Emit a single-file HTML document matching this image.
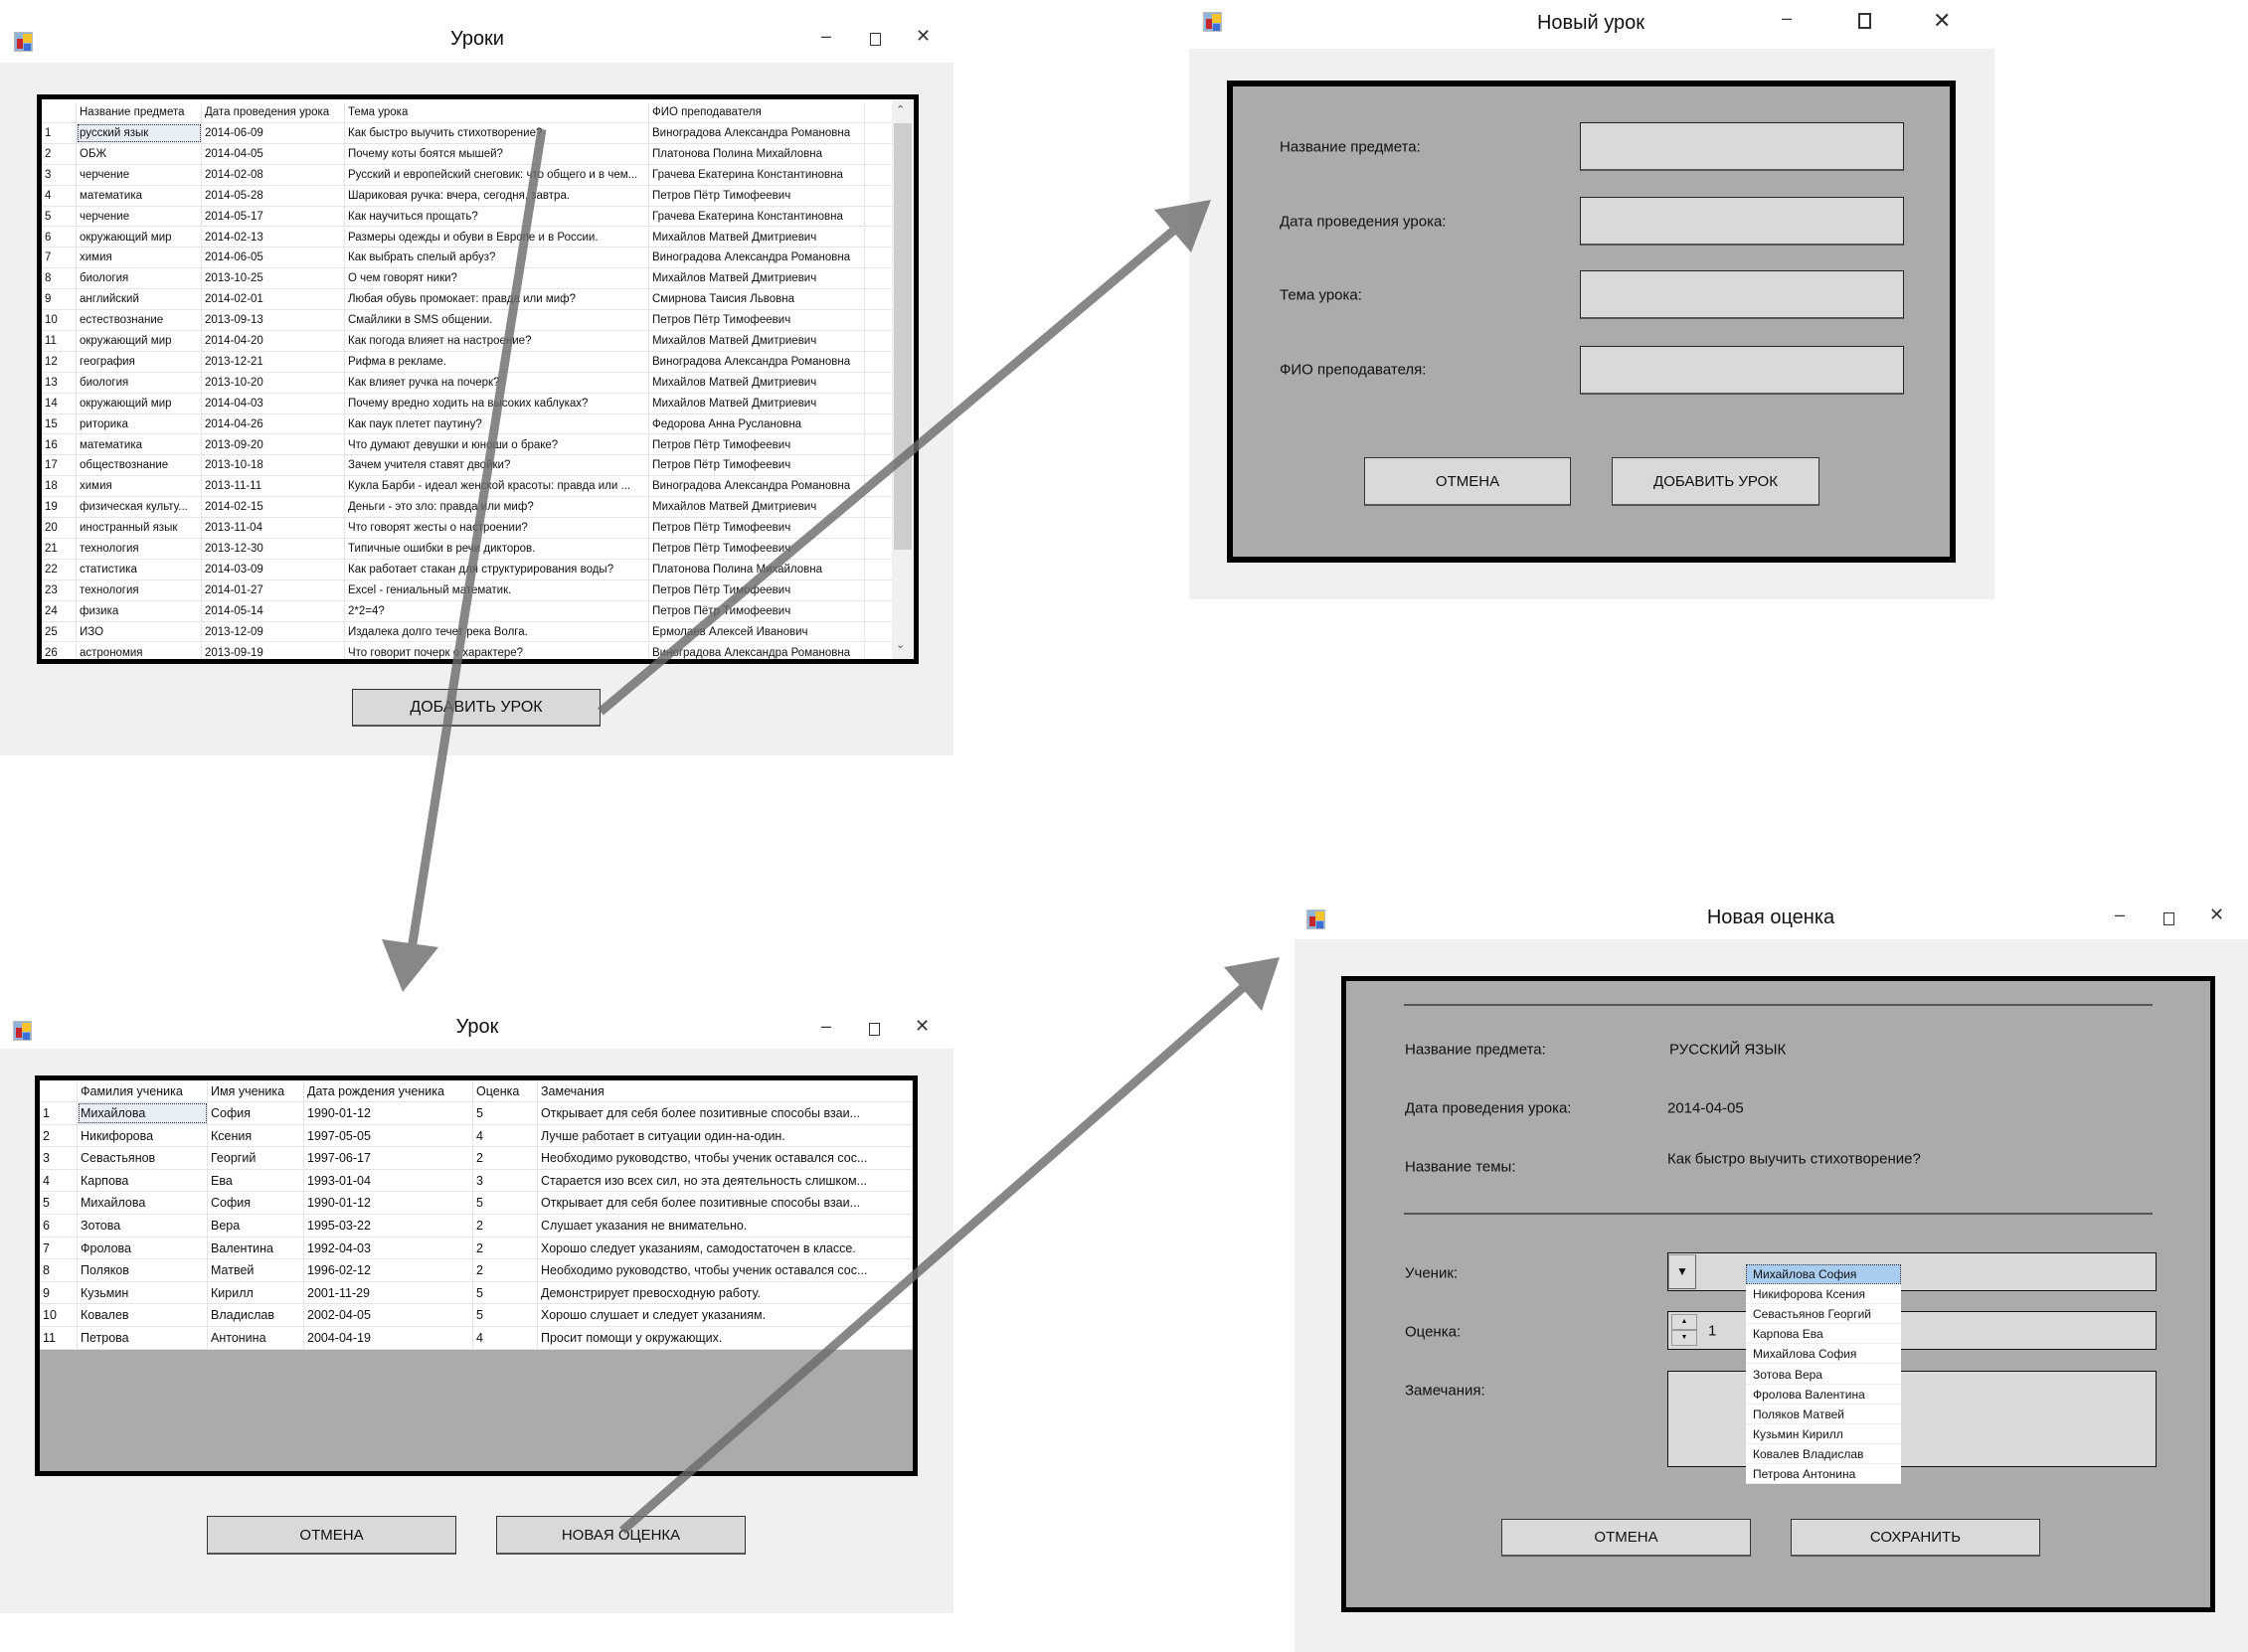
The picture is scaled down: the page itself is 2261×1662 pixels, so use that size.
<!DOCTYPE html>
<html><head><meta charset="utf-8">
<style>
*{margin:0;padding:0;box-sizing:border-box}
body{width:2261px;height:1662px;background:#fff;position:relative;overflow:hidden;font-family:"Liberation Sans","DejaVu Sans",sans-serif;color:#111}
.a{position:absolute}
.title{position:absolute;font-size:20px;color:#111;transform:translateX(-50%);white-space:nowrap}
.client{position:absolute;background:#f0f0f0}
.ico{position:absolute;width:19px;height:20px;background:#8fb3d9;border:1px solid #bbb}
.ico:before{content:"";position:absolute;left:2px;top:6px;width:6px;height:10px;background:#c4262b}
.ico:after{content:"";position:absolute;left:8px;top:1px;width:9px;height:9px;background:#f7c32c;box-shadow:0 9px 0 -1px #3d6fd6}
.ctl{position:absolute;font-size:18px;color:#333}
.tbl{position:absolute;font-size:11.5px;white-space:nowrap;overflow:hidden;background:#fff}
.row{position:absolute;left:0;right:0;border-bottom:1px solid #e4e4e4}
.row span{position:absolute;top:0;overflow:hidden;border-right:1px solid #e4e4e4;height:100%;padding-left:3px}
.btn{position:absolute;background:#d9d9d9;border:1px solid #333;border-bottom:2px solid #555;font-size:15px;display:flex;align-items:center;justify-content:center;color:#111}
.lbl{position:absolute;font-size:15px;white-space:nowrap;transform:translateY(-50%)}
.inp{position:absolute;background:#d9d9d9;border:1px solid #222;border-bottom:2px solid #555}
</style></head><body>

<!-- Window 1: Уроки -->
<div class="ico" style="left:14px;top:32px"></div>
<div class="title" style="left:480px;top:28px">Уроки</div>
<div class="ctl" style="left:826px;top:26px">–</div>
<div class="a" style="left:875px;top:33px;width:11px;height:13px;border:1px solid #333"></div>
<div class="ctl" style="left:921px;top:26px">✕</div>
<div class="client" style="left:0;top:63px;width:959px;height:697px"></div>
<div class="a" style="left:37px;top:95px;width:887px;height:573px;background:#000"></div>
<div class="tbl" id="t1" style="left:42px;top:100px;width:877px;height:563px"></div>
<div class="btn" style="left:354px;top:693px;width:250px;height:38px;font-size:16px">ДОБАВИТЬ УРОК</div>

<!-- Window 2: Новый урок -->
<div class="ico" style="left:1210px;top:12px"></div>
<div class="title" style="left:1600px;top:12px">Новый урок</div>
<div class="ctl" style="left:1792px;top:8px">–</div>
<div class="a" style="left:1869px;top:13px;width:13px;height:16px;border:2px solid #333"></div>
<div class="ctl" style="left:1944px;top:8px;font-size:22px">✕</div>
<div class="client" style="left:1196px;top:49px;width:810px;height:554px"></div>
<div class="a" style="left:1234px;top:81px;width:733px;height:485px;background:#ababab;border:6px solid #000"></div>
<div class="lbl" style="left:1287px;top:148px">Название предмета:</div>
<div class="lbl" style="left:1287px;top:223px">Дата проведения урока:</div>
<div class="lbl" style="left:1287px;top:297px">Тема урока:</div>
<div class="lbl" style="left:1287px;top:372px">ФИО преподавателя:</div>
<div class="inp" style="left:1589px;top:123px;width:326px;height:49px"></div>
<div class="inp" style="left:1589px;top:198px;width:326px;height:49px"></div>
<div class="inp" style="left:1589px;top:272px;width:326px;height:49px"></div>
<div class="inp" style="left:1589px;top:348px;width:326px;height:49px"></div>
<div class="btn" style="left:1372px;top:460px;width:208px;height:49px">ОТМЕНА</div>
<div class="btn" style="left:1621px;top:460px;width:209px;height:49px">ДОБАВИТЬ УРОК</div>

<!-- Window 3: Урок -->
<div class="ico" style="left:13px;top:1027px"></div>
<div class="title" style="left:480px;top:1022px">Урок</div>
<div class="ctl" style="left:826px;top:1022px">–</div>
<div class="a" style="left:874px;top:1029px;width:11px;height:13px;border:1px solid #333"></div>
<div class="ctl" style="left:920px;top:1022px">✕</div>
<div class="client" style="left:0;top:1055px;width:959px;height:568px"></div>
<div class="a" style="left:35px;top:1082px;width:888px;height:403px;background:#000"></div>
<div class="a" style="left:40px;top:1087px;width:878px;height:393px;background:#ababab"></div>
<div class="tbl" id="t3" style="left:40px;top:1087px;width:878px;height:271px;font-size:12.5px"></div>
<div class="btn" style="left:208px;top:1525px;width:251px;height:39px">ОТМЕНА</div>
<div class="btn" style="left:499px;top:1525px;width:251px;height:39px">НОВАЯ ОЦЕНКА</div>

<!-- Window 4: Новая оценка -->
<div class="ico" style="left:1314px;top:915px"></div>
<div class="title" style="left:1781px;top:912px">Новая оценка</div>
<div class="ctl" style="left:2127px;top:910px">–</div>
<div class="a" style="left:2176px;top:918px;width:11px;height:13px;border:1px solid #333"></div>
<div class="ctl" style="left:2222px;top:910px">✕</div>
<div class="client" style="left:1302px;top:945px;width:959px;height:717px"></div>
<div class="a" style="left:1349px;top:982px;width:879px;height:640px;background:#ababab;border:5px solid #000"></div>
<div class="a" style="left:1412px;top:1010px;width:753px;height:2px;background:#555"></div>
<div class="a" style="left:1412px;top:1220px;width:753px;height:2px;background:#555"></div>
<div class="lbl" style="left:1413px;top:1056px">Название предмета:</div>
<div class="lbl" style="left:1413px;top:1115px">Дата проведения урока:</div>
<div class="lbl" style="left:1413px;top:1174px">Название темы:</div>
<div class="lbl" style="left:1413px;top:1281px">Ученик:</div>
<div class="lbl" style="left:1413px;top:1340px">Оценка:</div>
<div class="lbl" style="left:1413px;top:1399px">Замечания:</div>
<div class="lbl" style="left:1679px;top:1056px">РУССКИЙ ЯЗЫК</div>
<div class="lbl" style="left:1677px;top:1115px">2014-04-05</div>
<div class="lbl" style="left:1677px;top:1166px">Как быстро выучить стихотворение?</div>
<div class="a" style="left:1677px;top:1260px;width:492px;height:39px;background:#d9d9d9;border:1px solid #111"></div>
<div class="a" style="left:1678px;top:1262px;width:28px;height:35px;background:#ddd;border:1px solid #999;border-right-color:#666;border-bottom-color:#666;font-size:12px;text-align:center;line-height:33px">▼</div>
<div class="a" style="left:1677px;top:1319px;width:492px;height:39px;background:#d9d9d9;border:1px solid #111"></div>
<div class="a" style="left:1681px;top:1322px;width:26px;height:16px;background:#ddd;border:1px solid #999;font-size:7px;text-align:center;line-height:14px">▲</div>
<div class="a" style="left:1681px;top:1338px;width:26px;height:16px;background:#ddd;border:1px solid #999;font-size:7px;text-align:center;line-height:14px">▼</div>
<div class="lbl" style="left:1718px;top:1339px">1</div>
<div class="a" style="left:1677px;top:1379px;width:492px;height:97px;background:#d9d9d9;border:1px solid #111"></div>
<div class="a" id="dd" style="left:1756px;top:1272px;width:156px;height:221px;background:#fff;font-size:12px"></div>
<div class="btn" style="left:1510px;top:1528px;width:251px;height:38px">ОТМЕНА</div>
<div class="btn" style="left:1801px;top:1528px;width:251px;height:38px">СОХРАНИТЬ</div>

<!-- Arrows -->
<svg class="a" style="left:0;top:0" width="2261" height="1662">
 <g fill="#6a6a6a" stroke="#6a6a6a" opacity="0.8">
  <line x1="545" y1="130" x2="414" y2="955" stroke-width="9"/>
  <polygon points="384,945 441,953 405,998" stroke="none"/>
  <line x1="604" y1="716" x2="1185" y2="228" stroke-width="9"/>
  <polygon points="1161,211 1218,201 1198,254" stroke="none"/>
  <line x1="626" y1="1540" x2="1252" y2="992" stroke-width="9"/>
  <polygon points="1231,973 1287,963 1269,1017" stroke="none"/>
 </g>
</svg>

<script>
(function(){
 var d1=[["русский язык","2014-06-09","Как быстро выучить стихотворение?","Виноградова Александра Романовна"],
 ["ОБЖ","2014-04-05","Почему коты боятся мышей?","Платонова Полина Михайловна"],
 ["черчение","2014-02-08","Русский и европейский снеговик: что общего и в чем...","Грачева Екатерина Константиновна"],
 ["математика","2014-05-28","Шариковая ручка: вчера, сегодня, завтра.","Петров Пётр Тимофеевич"],
 ["черчение","2014-05-17","Как научиться прощать?","Грачева Екатерина Константиновна"],
 ["окружающий мир","2014-02-13","Размеры одежды и обуви в Европе и в России.","Михайлов Матвей Дмитриевич"],
 ["химия","2014-06-05","Как выбрать спелый арбуз?","Виноградова Александра Романовна"],
 ["биология","2013-10-25","О чем говорят ники?","Михайлов Матвей Дмитриевич"],
 ["английский","2014-02-01","Любая обувь промокает: правда или миф?","Смирнова Таисия Львовна"],
 ["естествознание","2013-09-13","Смайлики в SMS общении.","Петров Пётр Тимофеевич"],
 ["окружающий мир","2014-04-20","Как погода влияет на настроение?","Михайлов Матвей Дмитриевич"],
 ["география","2013-12-21","Рифма в рекламе.","Виноградова Александра Романовна"],
 ["биология","2013-10-20","Как влияет ручка на почерк?","Михайлов Матвей Дмитриевич"],
 ["окружающий мир","2014-04-03","Почему вредно ходить на высоких каблуках?","Михайлов Матвей Дмитриевич"],
 ["риторика","2014-04-26","Как паук плетет паутину?","Федорова Анна Руслановна"],
 ["математика","2013-09-20","Что думают девушки и юноши о браке?","Петров Пётр Тимофеевич"],
 ["обществознание","2013-10-18","Зачем учителя ставят двойки?","Петров Пётр Тимофеевич"],
 ["химия","2013-11-11","Кукла Барби - идеал женской красоты: правда или ...","Виноградова Александра Романовна"],
 ["физическая культу...","2014-02-15","Деньги - это зло: правда или миф?","Михайлов Матвей Дмитриевич"],
 ["иностранный язык","2013-11-04","Что говорят жесты о настроении?","Петров Пётр Тимофеевич"],
 ["технология","2013-12-30","Типичные ошибки в речи дикторов.","Петров Пётр Тимофеевич"],
 ["статистика","2014-03-09","Как работает стакан для структурирования воды?","Платонова Полина Михайловна"],
 ["технология","2014-01-27","Excel - гениальный математик.","Петров Пётр Тимофеевич"],
 ["физика","2014-05-14","2*2=4?","Петров Пётр Тимофеевич"],
 ["ИЗО","2013-12-09","Издалека долго течет река Волга.","Ермолаев Алексей Иванович"],
 ["астрономия","2013-09-19","Что говорит почерк о характере?","Виноградова Александра Романовна"]];
 var c1=[0,35,161,305,611,828],h="";
 function row(top,hgt,cells,cols,first){var s='<div class="row" style="top:'+top+'px;height:'+hgt+'px;line-height:'+hgt+'px">';
  for(var i=0;i<cells.length;i++){var st='left:'+cols[i]+'px;width:'+(cols[i+1]-cols[i])+'px;';
   if(first&&i==1)st+='background:#e8eef5;outline:1px dotted #333;outline-offset:-2px;';
   s+='<span style="'+st+'">'+cells[i]+'</span>';}
  return s+'</div>';}
 h+=row(3,21,["","Название предмета","Дата проведения урока","Тема урока","ФИО преподавателя"],c1);
 for(var i=0;i<d1.length;i++)h+=row(24+i*20.9,20.9,[String(i+1)].concat(d1[i]),c1,i==0);
 h+='<div class="a" style="left:855px;top:0;width:22px;height:563px;background:#f0f0f0"></div>';
 h+='<div class="a" style="left:857px;top:24px;width:18px;height:429px;background:#cdcdcd"></div>';
 h+='<div class="a" style="left:859px;top:4px;font-size:11px;color:#555">⌃</div>';
 h+='<div class="a" style="left:859px;top:542px;font-size:11px;color:#555">⌄</div>';
 document.getElementById('t1').innerHTML=h;
 var d3=[["Михайлова","София","1990-01-12","5","Открывает для себя более позитивные способы взаи..."],
 ["Никифорова","Ксения","1997-05-05","4","Лучше работает в ситуации один-на-один."],
 ["Севастьянов","Георгий","1997-06-17","2","Необходимо руководство, чтобы ученик оставался сос..."],
 ["Карпова","Ева","1993-01-04","3","Старается изо всех сил, но эта деятельность слишком..."],
 ["Михайлова","София","1990-01-12","5","Открывает для себя более позитивные способы взаи..."],
 ["Зотова","Вера","1995-03-22","2","Слушает указания не внимательно."],
 ["Фролова","Валентина","1992-04-03","2","Хорошо следует указаниям, самодостаточен в классе."],
 ["Поляков","Матвей","1996-02-12","2","Необходимо руководство, чтобы ученик оставался сос..."],
 ["Кузьмин","Кирилл","2001-11-29","5","Демонстрирует превосходную работу."],
 ["Ковалев","Владислав","2002-04-05","5","Хорошо слушает и следует указаниям."],
 ["Петрова","Антонина","2004-04-19","4","Просит помощи у окружающих."]];
 var c3=[0,38,169,266,436,501,878];h="";
 h+=row(0,22,["","Фамилия ученика","Имя ученика","Дата рождения ученика","Оценка","Замечания"],c3);
 for(i=0;i<d3.length;i++)h+=row(22+i*22.6,22.6,[String(i+1)].concat(d3[i]),c3,i==0);
 document.getElementById('t3').innerHTML=h;
 var dd=["Михайлова София","Никифорова Ксения","Севастьянов Георгий","Карпова Ева","Михайлова София","Зотова Вера","Фролова Валентина","Поляков Матвей","Кузьмин Кирилл","Ковалев Владислав","Петрова Антонина"];h="";
 for(i=0;i<dd.length;i++)h+='<div class="a" style="left:0;width:156px;top:'+(i*20.1)+'px;height:20px;line-height:20px;padding-left:7px;border-bottom:1px solid #eee;'+(i==0?'background:#a9cdf0;outline:1px dotted #333;outline-offset:-1px;':'')+'">'+dd[i]+'</div>';
 document.getElementById('dd').innerHTML=h;
})();
</script>
</body></html>
